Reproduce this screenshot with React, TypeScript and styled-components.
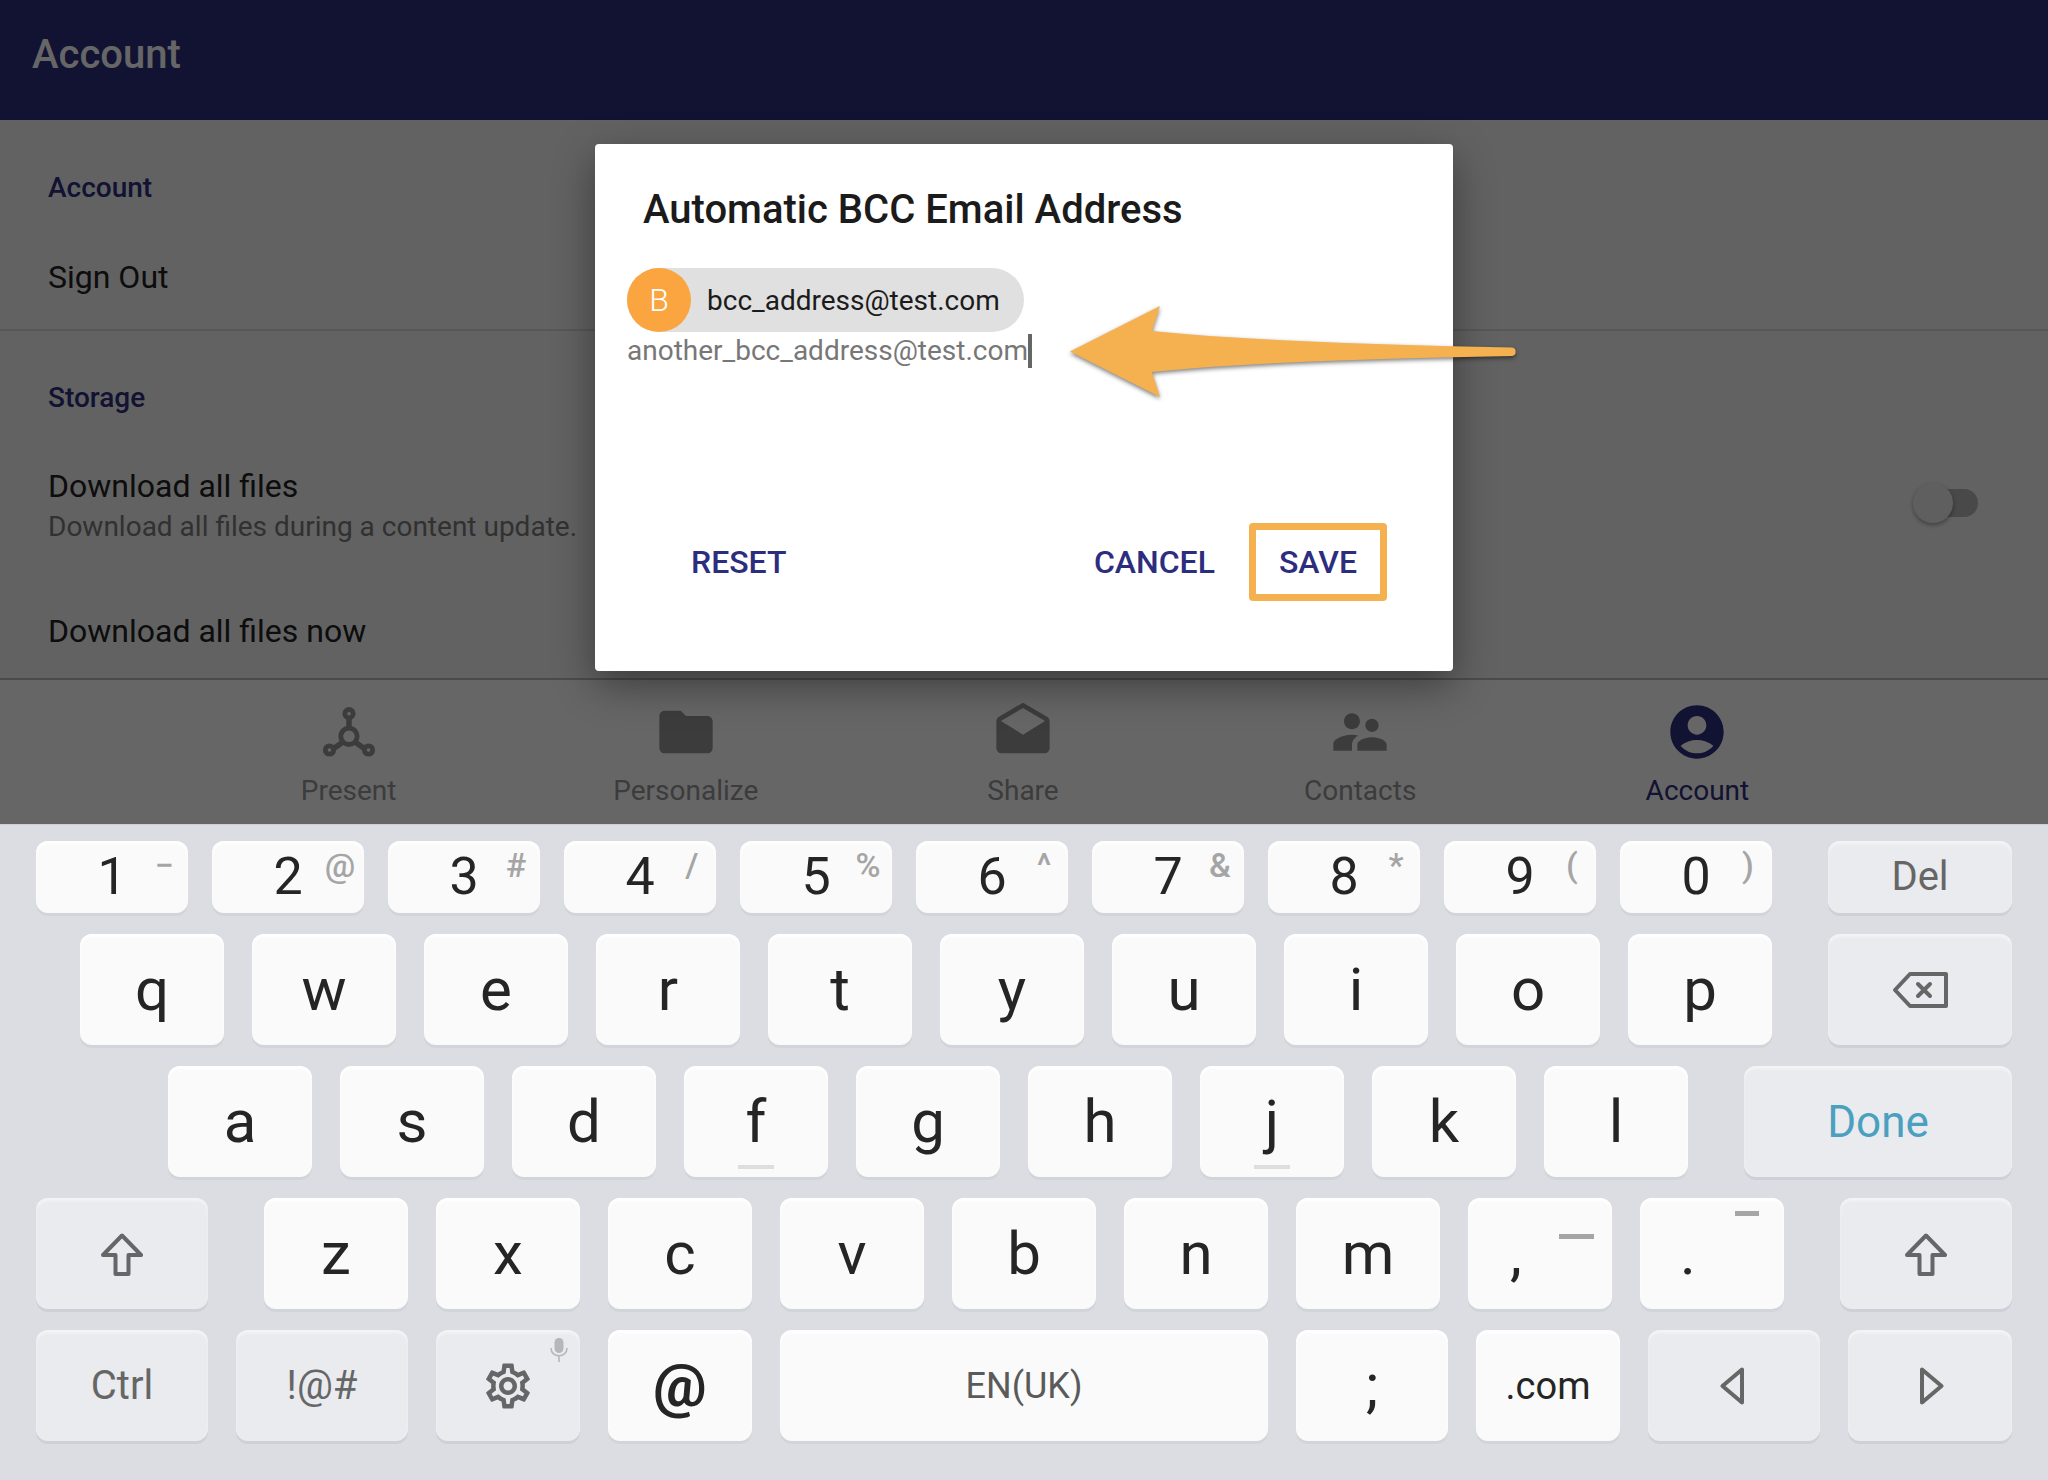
import React from "react";
import styled, { createGlobalStyle, css } from "styled-components";
import {
  MdAccountCircle,
  MdDrafts,
  MdFolder,
  MdOutlineSettings,
  MdSupervisorAccount,
} from "react-icons/md";

const color = {
  brand: "#2d2d80",
  accent: "#f5b14f",
  avatar: "#fba540",
  text: "#212121",
  muted: "#7a7a7a",
  tab: "#969696",
  keyboard: "#dcdde2",
  keyText: "#252525",
  fnText: "#666666",
};

const GlobalStyle = createGlobalStyle`
  *, *::before, *::after { box-sizing: border-box; }
  body {
    margin: 0;
    font-family: Roboto, "Liberation Sans", sans-serif;
    color: ${color.text};
  }
  button, input {
    margin: 0;
    padding: 0;
    border: 0;
    background: none;
    font: inherit;
    color: inherit;
  }
  h1, h2, p { margin: 0; font-weight: inherit; font-size: inherit; }
`;

const Page = styled.div`
  display: flex;
  flex-direction: column;
  height: 100vh;
`;

/* ---------- app screen ---------- */

const Screen = styled.main`
  position: relative;
  flex: 1;
  min-height: 0;
  display: flex;
  flex-direction: column;
`;

const AppBar = styled.header`
  padding: 31px 32px 41px;
  background: ${color.brand};
`;

const AppTitle = styled.h1`
  font-size: 40px;
  line-height: 48px;
  font-weight: 500;
  color: #ffffff;
`;

const Settings = styled.div`
  flex: 1;
  min-height: 0;
  overflow: hidden;
  padding-top: 1px;
  background: #f5f5f5;
`;

const Section = styled.section`
  & + & {
    border-top: 2px solid #dadada;
  }
`;

const SectionTitle = styled.h2`
  padding: 51px 48px 21px;
  font-size: 28px;
  line-height: 32px;
  font-weight: 500;
  color: ${color.brand};
`;

const rowStyle = css`
  display: flex;
  align-items: center;
  justify-content: space-between;
  width: 100%;
  padding: 32px 48px;
  font-size: 32px;
  line-height: 40px;
  text-align: left;
`;

const RowButton = styled.button`
  ${rowStyle}
`;

const RowLabel = styled.label`
  ${rowStyle}
  padding: 31px 70px 32px 48px;
`;

const RowText = styled.span`
  display: flex;
  flex-direction: column;
  gap: 1px;
`;

const RowHint = styled.span`
  font-size: 28px;
  color: ${color.muted};
`;

const Switch = styled.input.attrs({ type: "checkbox" })`
  appearance: none;
  display: flex;
  align-items: center;
  width: 56px;
  height: 28px;
  margin-bottom: 8px;
  border-radius: 14px;
  background: #b6b6b6;

  &::before {
    content: "";
    flex: none;
    width: 40px;
    height: 40px;
    margin-left: -9px;
    border-radius: 50%;
    background: #ededed;
    box-shadow: 0 2px 4px rgba(0, 0, 0, 0.35);
  }
`;

const TabBar = styled.nav`
  display: flex;
  padding: 20px 182px 17px 180px;
  border-top: 2px solid #bcbcbc;
  background: #ffffff;
`;

const Tab = styled.button<{ $active?: boolean }>`
  flex: 1;
  display: flex;
  flex-direction: column;
  align-items: center;
  gap: 11px;
  font-size: 28px;
  line-height: 32px;
  color: ${(p) => (p.$active ? color.brand : color.tab)};

  svg {
    width: 64px;
    height: 64px;
  }
`;

/* ---------- dialog ---------- */

const Scrim = styled.div`
  position: absolute;
  inset: 0;
  display: flex;
  justify-content: center;
  align-items: flex-start;
  padding-top: 144px;
  background: rgba(0, 0, 0, 0.6);
  overflow: hidden;
`;

const Dialog = styled.div`
  position: relative;
  width: 858px;
  max-width: 90%;
  padding: 42px 0 70px;
  border-radius: 4px;
  background: #ffffff;
  box-shadow: 0 14px 40px rgba(0, 0, 0, 0.4);
`;

const DialogTitle = styled.h2`
  padding: 0 48px;
  font-size: 40px;
  line-height: 48px;
  font-weight: 500;
  color: #1b1b1b;
`;

const Recipients = styled.div`
  display: flex;
  flex-direction: column;
  align-items: flex-start;
  min-height: 289px;
  padding: 34px 32px 0;
  font-size: 28px;
`;

const Chip = styled.span`
  display: flex;
  align-items: center;
  gap: 16px;
  height: 64px;
  padding-right: 24px;
  border-radius: 32px;
  background: #e0e0e0;
  color: #1b1b1b;
`;

const Avatar = styled.span`
  display: flex;
  align-items: center;
  justify-content: center;
  width: 64px;
  height: 64px;
  border-radius: 50%;
  background: ${color.avatar};
  color: #ffffff;
  font-size: 32px;
  font-weight: 300;
`;

const Entry = styled.div`
  display: flex;
  align-items: center;
`;

const EntryInput = styled.input`
  field-sizing: content;
  height: 38px;
  line-height: 38px;
  color: #777777;
  outline: none;
  caret-color: transparent;
`;

const Caret = styled.span`
  width: 4px;
  height: 34px;
  background: #666666;
`;

const Actions = styled.div`
  display: flex;
  gap: 4px;
  padding: 0 66px;
`;

const ActionButton = styled.button<{ $marked?: boolean; $start?: boolean }>`
  height: 78px;
  margin-right: ${(p) => (p.$start ? "auto" : 0)};
  padding: 0 23px;
  border: 7px solid ${(p) => (p.$marked ? color.accent : "transparent")};
  border-radius: 4px;
  font-size: 32px;
  font-weight: 500;
  color: ${color.brand};
`;

const Pointer = styled.svg`
  position: absolute;
  left: 474px;
  top: 162px;
  width: 450px;
  height: 92px;
  overflow: visible;
  filter: drop-shadow(0 2px 2px rgba(0, 0, 0, 0.5));
`;

/* ---------- keyboard ---------- */

const Keyboard = styled.section`
  display: flex;
  flex-direction: column;
  gap: 21px;
  padding: 16px 36px 39px;
  border-top: 1px solid #cfcfd1;
  background: ${color.keyboard};
`;

const KeyRow = styled.div<{ $gap: number; $indent?: number; $height?: number }>`
  display: flex;
  gap: ${(p) => p.$gap}px;
  height: ${(p) => p.$height ?? 111}px;
  padding-left: ${(p) => p.$indent ?? 0}px;
`;

type KeyStyle = {
  $w: number;
  $fn?: boolean;
  $size?: number;
  $before?: number;
  $after?: number;
  $tone?: string;
  $bold?: boolean;
};

const KeyCap = styled.button<KeyStyle>`
  position: relative;
  flex: ${(p) => p.$w} 1 0;
  min-width: 0;
  display: flex;
  align-items: center;
  justify-content: center;
  margin-left: ${(p) => p.$before ?? 0}px;
  margin-right: ${(p) => p.$after ?? 0}px;
  border-radius: 12px;
  font-size: ${(p) => p.$size ?? 60}px;
  font-weight: ${(p) => (p.$bold ? 700 : 400)};
  line-height: 1;
  color: ${(p) => p.$tone ?? (p.$fn ? color.fnText : color.keyText)};
  background: ${(p) => (p.$fn ? "#e9ebef" : "#fafafa")};
  box-shadow: 0 3px 0 ${(p) => (p.$fn ? "#cfd0d7" : "#d1d4d8")},
    inset 0 3px 3px ${(p) => (p.$fn ? "#f3f4f6" : "#ffffff")};
`;

const Hint = styled.span`
  position: absolute;
  top: 0;
  right: 0;
  width: 48px;
  height: 48px;
  display: flex;
  align-items: center;
  justify-content: center;
  font-size: 34px;
  font-weight: 500;
  color: #a5a5a5;
`;

/* main glyph of a key that leaves room for its alternate on the right */
const LeadGlyph = styled.span`
  padding-right: 48px;
`;

const HomeMark = styled.span`
  position: absolute;
  left: calc(50% - 18px);
  bottom: 8px;
  width: 36px;
  height: 4px;
  background: #dedede;
`;

const DashMark = styled.span<{ $top: number; $right: number; $width: number }>`
  position: absolute;
  top: ${(p) => p.$top}px;
  right: ${(p) => p.$right}px;
  width: ${(p) => p.$width}px;
  height: 5px;
  background: #a5a5a5;
`;

const MicMark = styled.svg`
  position: absolute;
  top: 8px;
  right: 12px;
  width: 18px;
  height: 24px;
`;

const LineIcon = styled.svg`
  fill: none;
  stroke: currentColor;
  stroke-width: 4;
  stroke-linejoin: round;
  stroke-linecap: round;
`;

/* ---------- icons ---------- */

const PresentIcon = () => (
  <svg viewBox="0 0 64 64" fill="none" stroke="currentColor" aria-hidden="true">
    <g strokeWidth="5.5">
      <path d="M32 18v11M26 42l-10 7M38 42l10 7" />
    </g>
    <g strokeWidth="4.8">
      <circle cx="32" cy="13.7" r="4.2" />
      <circle cx="12.5" cy="50" r="4.2" />
      <circle cx="51.5" cy="50" r="4.2" />
      <circle cx="32" cy="36.3" r="8.2" />
    </g>
  </svg>
);

const ShiftIcon = () => (
  <LineIcon width="48" height="48" viewBox="0 0 48 48" aria-hidden="true">
    <path d="M24 5.5 43 25H30.5v19h-13V25H5z" />
  </LineIcon>
);

const BackspaceIcon = () => (
  <LineIcon width="56" height="40" viewBox="0 0 56 40" aria-hidden="true">
    <path d="M18 4h36v32H18L3 20z" />
    <path d="m26 14 12 12M38 14 26 26" />
  </LineIcon>
);

const LeftIcon = () => (
  <LineIcon width="28" height="40" viewBox="0 0 28 40" aria-hidden="true">
    <path d="M22 3.5v33L2.5 20z" />
  </LineIcon>
);

const RightIcon = () => (
  <LineIcon width="28" height="40" viewBox="0 0 28 40" aria-hidden="true">
    <path d="M6 3.5v33L25.5 20z" />
  </LineIcon>
);

/* ---------- data ---------- */

const tabs = [
  { label: "Present", icon: <PresentIcon /> },
  { label: "Personalize", icon: <MdFolder /> },
  { label: "Share", icon: <MdDrafts /> },
  { label: "Contacts", icon: <MdSupervisorAccount /> },
  { label: "Account", icon: <MdAccountCircle />, active: true },
];

const digits: [string, string][] = [
  ["1", "−"],
  ["2", "@"],
  ["3", "#"],
  ["4", "/"],
  ["5", "%"],
  ["6", "^"],
  ["7", "&"],
  ["8", "*"],
  ["9", "("],
  ["0", ")"],
];

const letterKeys = (letters: string) =>
  letters.split("").map((letter) => (
    <KeyCap key={letter} $w={144}>
      {letter}
      {"fj".includes(letter) && <HomeMark />}
    </KeyCap>
  ));

export default function App() {
  const [address, setAddress] = React.useState("another_bcc_address@test.com");
  const [downloadAll, setDownloadAll] = React.useState(false);

  return (
    <>
      <GlobalStyle />
      <Page>
        <Screen>
          <AppBar>
            <AppTitle>Account</AppTitle>
          </AppBar>
          <Settings>
            <Section>
              <SectionTitle>Account</SectionTitle>
              <RowButton>Sign Out</RowButton>
            </Section>
            <Section>
              <SectionTitle>Storage</SectionTitle>
              <RowLabel htmlFor="download-all">
                <RowText>
                  Download all files
                  <RowHint>Download all files during a content update.</RowHint>
                </RowText>
                <Switch
                  id="download-all"
                  checked={downloadAll}
                  onChange={(e) => setDownloadAll(e.target.checked)}
                />
              </RowLabel>
              <RowButton>Download all files now</RowButton>
            </Section>
          </Settings>
          <TabBar>
            {tabs.map((tab) => (
              <Tab key={tab.label} $active={tab.active}>
                {tab.icon}
                {tab.label}
              </Tab>
            ))}
          </TabBar>

          <Scrim>
            <Dialog role="dialog" aria-labelledby="bcc-title">
              <DialogTitle id="bcc-title">Automatic BCC Email Address</DialogTitle>
              <Recipients>
                <Chip>
                  <Avatar>B</Avatar>
                  bcc_address@test.com
                </Chip>
                <Entry>
                  <EntryInput
                    aria-labelledby="bcc-title"
                    value={address}
                    onChange={(e) => setAddress(e.target.value)}
                  />
                  <Caret />
                </Entry>
              </Recipients>
              <Actions>
                <ActionButton $start>RESET</ActionButton>
                <ActionButton>CANCEL</ActionButton>
                <ActionButton $marked>SAVE</ActionButton>
              </Actions>
              <Pointer viewBox="0 0 450 92" aria-hidden="true">
                <path
                  fill={color.accent}
                  d="M1 45.5 91 0 83 25Q201 37 443 41.5A4.3 4.3 0 0 1 443 50Q201 54 83 66L91 91Z"
                />
              </Pointer>
            </Dialog>
          </Scrim>
        </Screen>

        <Keyboard aria-label="Keyboard">
          <KeyRow $gap={24} $height={72}>
            {digits.map(([digit, hint]) => (
              <KeyCap key={digit} $w={152} $size={52}>
                {digit}
                <Hint>{hint}</Hint>
              </KeyCap>
            ))}
            <KeyCap $w={184} $fn $size={40} $before={32}>
              Del
            </KeyCap>
          </KeyRow>
          <KeyRow $gap={28} $indent={44}>
            {letterKeys("qwertyuiop")}
            <KeyCap $w={184} $fn $before={28} aria-label="Backspace">
              <BackspaceIcon />
            </KeyCap>
          </KeyRow>
          <KeyRow $gap={28} $indent={132}>
            {letterKeys("asdfghjkl")}
            <KeyCap $w={268} $fn $size={44} $before={28} $tone="#4ba0c0">
              Done
            </KeyCap>
          </KeyRow>
          <KeyRow $gap={28}>
            <KeyCap $w={172} $fn $after={28} aria-label="Shift">
              <ShiftIcon />
            </KeyCap>
            {letterKeys("zxcvbnm")}
            <KeyCap $w={144}>
              <LeadGlyph>,</LeadGlyph>
              <DashMark $top={36} $right={18} $width={35} />
            </KeyCap>
            <KeyCap $w={144}>
              <LeadGlyph>.</LeadGlyph>
              <DashMark $top={13} $right={25} $width={24} />
            </KeyCap>
            <KeyCap $w={172} $fn $before={28} aria-label="Shift">
              <ShiftIcon />
            </KeyCap>
          </KeyRow>
          <KeyRow $gap={28}>
            <KeyCap $w={172} $fn $size={40}>
              Ctrl
            </KeyCap>
            <KeyCap $w={172} $fn $size={40}>
              !@#
            </KeyCap>
            <KeyCap $w={144} $fn $size={54} aria-label="Settings">
              <MdOutlineSettings />
              <MicMark viewBox="0 0 18 24" fill="none" stroke="#b5b7b9" aria-hidden="true">
                <rect x="4.5" y="0" width="9" height="15" rx="4.5" fill="#b5b7b9" stroke="none" />
                <path strokeWidth="1.6" d="M1 10C1 20.500 17 20.500 17 10M9 18v6" />
              </MicMark>
            </KeyCap>
            <KeyCap $w={144} $bold>
              @
            </KeyCap>
            <KeyCap $w={488} $size={36} $tone="#5a5a5a">
              EN(UK)
            </KeyCap>
            <KeyCap $w={152}>;</KeyCap>
            <KeyCap $w={144} $size={38}>
              .com
            </KeyCap>
            <KeyCap $w={172} $fn aria-label="Move left">
              <LeftIcon />
            </KeyCap>
            <KeyCap $w={164} $fn aria-label="Move right">
              <RightIcon />
            </KeyCap>
          </KeyRow>
        </Keyboard>
      </Page>
    </>
  );
}
